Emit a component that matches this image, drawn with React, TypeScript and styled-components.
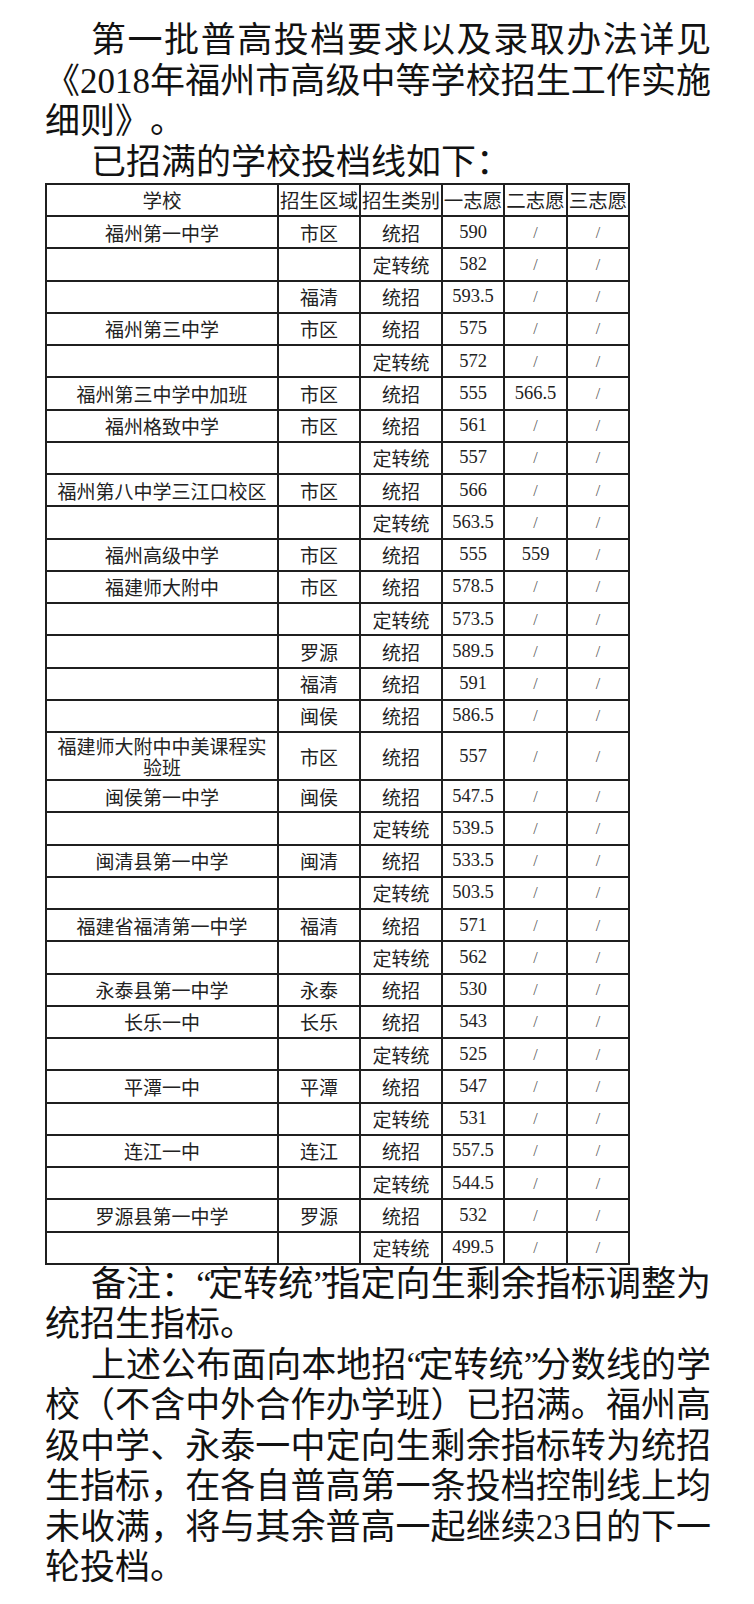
import React from "react";
import styled, { createGlobalStyle } from "styled-components";

const GlobalStyle = createGlobalStyle`
  html, body { margin: 0; padding: 0; background: #fff; }
  body { font-family: "Noto Sans CJK SC", sans-serif; color: #181818; }
`;

const Page = styled.div`
  width: 754px;
  min-height: 1604px;
  box-sizing: border-box;
  padding: 21px 0 0 45px;
  background: #fff;
`;

const Para = styled.p<{ $indent?: boolean }>`
  margin: 0;
  width: 666px;
  font-family: "Liberation Serif", "Noto Sans CJK SC", serif;
  font-size: 35px;
  line-height: 40.5px;
  text-align: justify;
  text-indent: ${(p) => (p.$indent ? "46px" : "0")};
  text-spacing-trim: space-all;
  color: #121212;
`;

const Quote = styled.span`
  letter-spacing: -3.5px;
`;

const Table = styled.table`
  border-collapse: collapse;
  table-layout: fixed;
  width: 583px;
  margin: 0;
  font-family: "Liberation Serif", "Noto Sans CJK SC", serif;
  color: #222;
`;

const Col = styled.col<{ $w: number }>`
  width: ${(p) => p.$w}px;
`;

const Row = styled.tr<{ $tall?: boolean; $head?: boolean }>`
  height: ${(p) => (p.$head ? "32px" : p.$tall ? "48px" : "32.26px")};
`;

const HeadCell = styled.th`
  border: 2px solid #1f1f1f;
  padding: 0;
  font-family: "Noto Sans CJK SC", sans-serif;
  font-weight: 400;
  font-size: 19.5px;
  line-height: 22px;
  text-align: center;
  vertical-align: middle;
  white-space: nowrap;
  overflow: hidden;
`;

const Cell = styled.td<{ $kind: "cjk" | "num" | "slash" }>`
  border: 2px solid #1f1f1f;
  padding: 0 6px;
  text-align: center;
  vertical-align: middle;
  font-family: ${(p) =>
    p.$kind === "cjk" ? '"Noto Sans CJK SC", sans-serif' : '"Liberation Serif", serif'};
  font-size: ${(p) => (p.$kind === "cjk" ? "19px" : p.$kind === "num" ? "18.5px" : "16px")};
  line-height: 21px;
  color: ${(p) => (p.$kind === "slash" ? "#5a5a5a" : "#222")};
  overflow: hidden;
`;

type R = [string, string, string, string, string?, string?];

const rows: R[] = [
  ["福州第一中学", "市区", "统招", "590"],
  ["", "", "定转统", "582"],
  ["", "福清", "统招", "593.5"],
  ["福州第三中学", "市区", "统招", "575"],
  ["", "", "定转统", "572"],
  ["福州第三中学中加班", "市区", "统招", "555", "566.5"],
  ["福州格致中学", "市区", "统招", "561"],
  ["", "", "定转统", "557"],
  ["福州第八中学三江口校区", "市区", "统招", "566"],
  ["", "", "定转统", "563.5"],
  ["福州高级中学", "市区", "统招", "555", "559"],
  ["福建师大附中", "市区", "统招", "578.5"],
  ["", "", "定转统", "573.5"],
  ["", "罗源", "统招", "589.5"],
  ["", "福清", "统招", "591"],
  ["", "闽侯", "统招", "586.5"],
  ["福建师大附中中美课程实验班", "市区", "统招", "557"],
  ["闽侯第一中学", "闽侯", "统招", "547.5"],
  ["", "", "定转统", "539.5"],
  ["闽清县第一中学", "闽清", "统招", "533.5"],
  ["", "", "定转统", "503.5"],
  ["福建省福清第一中学", "福清", "统招", "571"],
  ["", "", "定转统", "562"],
  ["永泰县第一中学", "永泰", "统招", "530"],
  ["长乐一中", "长乐", "统招", "543"],
  ["", "", "定转统", "525"],
  ["平潭一中", "平潭", "统招", "547"],
  ["", "", "定转统", "531"],
  ["连江一中", "连江", "统招", "557.5"],
  ["", "", "定转统", "544.5"],
  ["罗源县第一中学", "罗源", "统招", "532"],
  ["", "", "定转统", "499.5"],
];

const headers = ["学校", "招生区域", "招生类别", "一志愿", "二志愿", "三志愿"];
const widths = [232, 82, 82, 62, 63, 62];

function ChoiceCell({ value }: { value?: string }) {
  return value ? <Cell $kind="num">{value}</Cell> : <Cell $kind="slash">/</Cell>;
}

export default function App() {
  return (
    <Page>
      <GlobalStyle />
      <Para $indent>
        第一批普高投档要求以及录取办法详见《2018年福州市高级中等学校招生工作实施细则》。
      </Para>
      <Para $indent>已招满的学校投档线如下：</Para>
      <Table>
        <colgroup>
          {widths.map((w, i) => (
            <Col key={i} $w={w} />
          ))}
        </colgroup>
        <thead>
          <Row $head>
            {headers.map((h) => (
              <HeadCell key={h}>{h}</HeadCell>
            ))}
          </Row>
        </thead>
        <tbody>
          {rows.map((r, i) => (
            <Row key={i} $tall={r[0].length > 11}>
              <Cell $kind="cjk">{r[0]}</Cell>
              <Cell $kind="cjk">{r[1]}</Cell>
              <Cell $kind="cjk">{r[2]}</Cell>
              <Cell $kind="num">{r[3]}</Cell>
              <ChoiceCell value={r[4]} />
              <ChoiceCell value={r[5]} />
            </Row>
          ))}
        </tbody>
      </Table>
      <Para $indent>
        备注：<Quote>“</Quote>定转统<Quote>”</Quote>指定向生剩余指标调整为统招生指标。
      </Para>
      <Para $indent>
        上述公布面向本地招<Quote>“</Quote>定转统<Quote>”</Quote>分数线的学校（不含中外合作办学班）已招满。福州高级中学、永泰一中定向生剩余指标转为统招生指标，在各自普高第一条投档控制线上均未收满，将与其余普高一起继续23日的下一轮投档。
      </Para>
    </Page>
  );
}
